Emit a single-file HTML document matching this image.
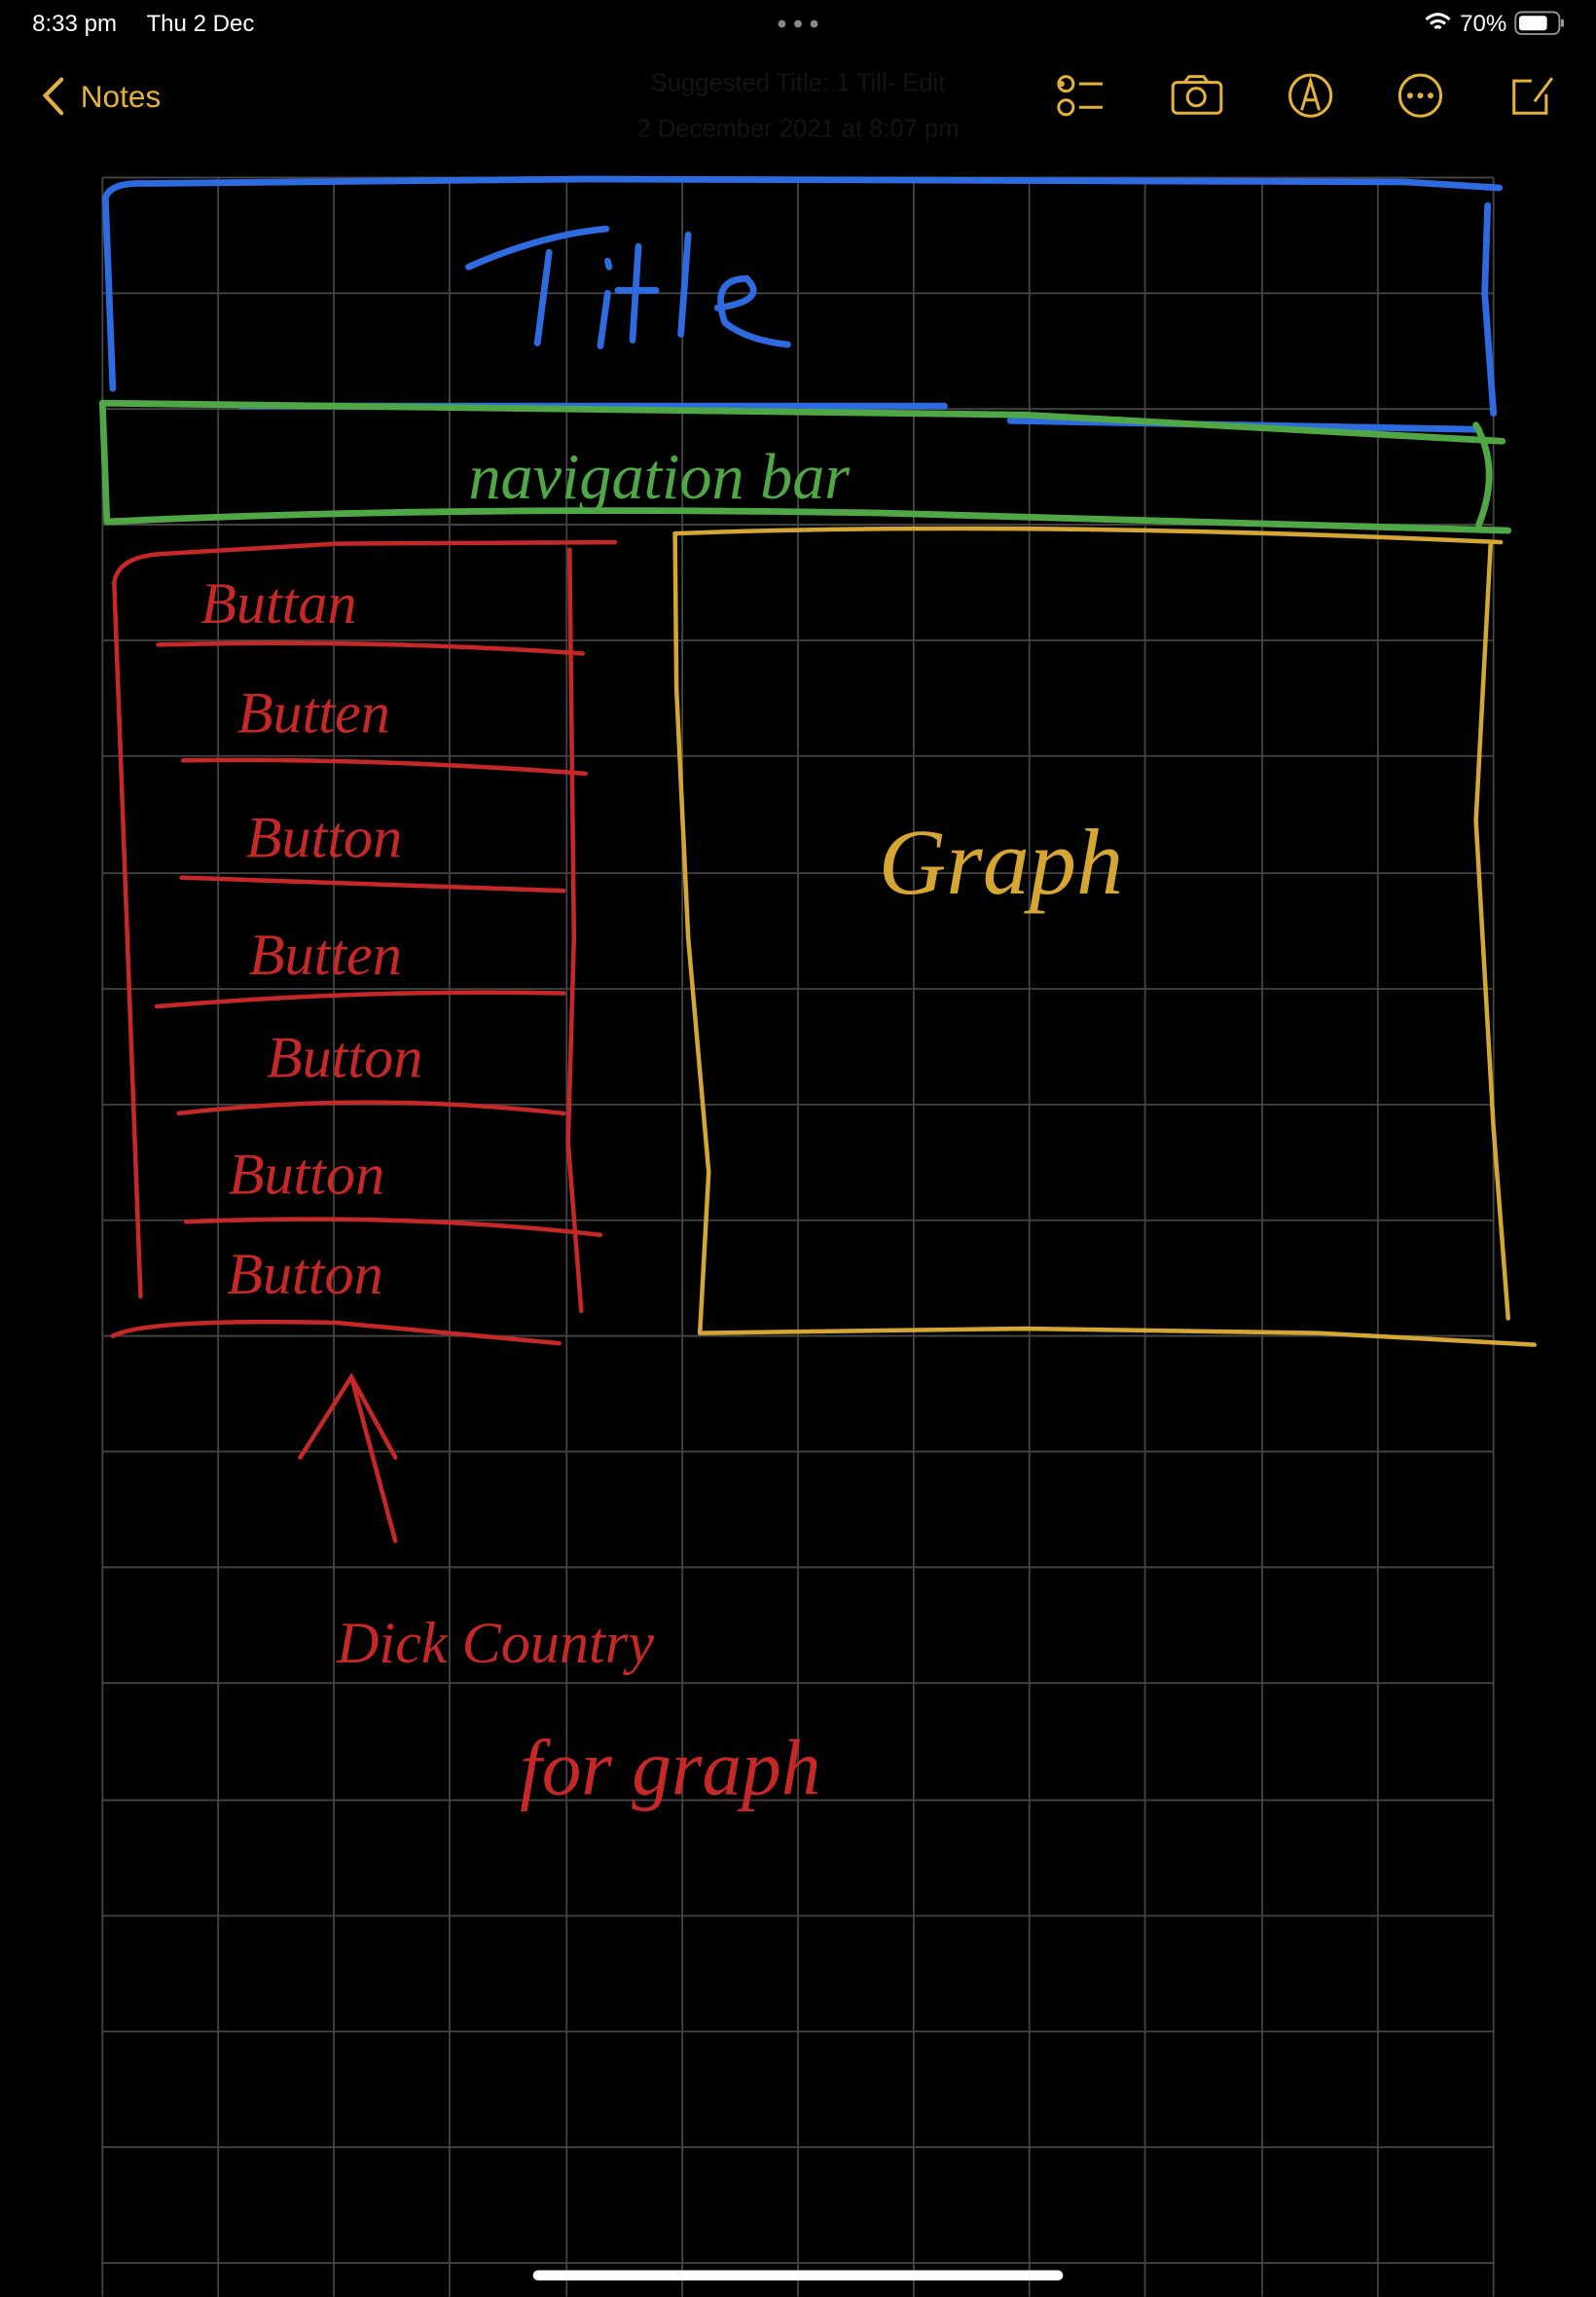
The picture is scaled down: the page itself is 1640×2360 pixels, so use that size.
<!DOCTYPE html>
<html><head><meta charset="utf-8"><style>
html,body{margin:0;padding:0;background:#000;width:1640px;height:2360px;overflow:hidden}
svg{display:block}
</style></head><body>
<svg width="1640" height="2360" viewBox="0 0 1090 1568" xmlns="http://www.w3.org/2000/svg" font-family="Liberation Sans, sans-serif">
<rect width="1090" height="1568" fill="#000"/>
<g stroke="#444" stroke-width="1.2">
<line x1="70" y1="121" x2="70" y2="1568"/><line x1="149" y1="121" x2="149" y2="1568"/><line x1="228" y1="121" x2="228" y2="1568"/><line x1="307" y1="121" x2="307" y2="1568"/><line x1="387" y1="121" x2="387" y2="1568"/><line x1="466" y1="121" x2="466" y2="1568"/><line x1="545" y1="121" x2="545" y2="1568"/><line x1="624" y1="121" x2="624" y2="1568"/><line x1="703" y1="121" x2="703" y2="1568"/><line x1="782" y1="121" x2="782" y2="1568"/><line x1="862" y1="121" x2="862" y2="1568"/><line x1="941" y1="121" x2="941" y2="1568"/><line x1="1020" y1="121" x2="1020" y2="1568"/>
<line x1="70" y1="121" x2="1020" y2="121"/><line x1="70" y1="200" x2="1020" y2="200"/><line x1="70" y1="279" x2="1020" y2="279"/><line x1="70" y1="358" x2="1020" y2="358"/><line x1="70" y1="437" x2="1020" y2="437"/><line x1="70" y1="516" x2="1020" y2="516"/><line x1="70" y1="596" x2="1020" y2="596"/><line x1="70" y1="675" x2="1020" y2="675"/><line x1="70" y1="754" x2="1020" y2="754"/><line x1="70" y1="833" x2="1020" y2="833"/><line x1="70" y1="912" x2="1020" y2="912"/><line x1="70" y1="991" x2="1020" y2="991"/><line x1="70" y1="1070" x2="1020" y2="1070"/><line x1="70" y1="1149" x2="1020" y2="1149"/><line x1="70" y1="1229" x2="1020" y2="1229"/><line x1="70" y1="1308" x2="1020" y2="1308"/><line x1="70" y1="1387" x2="1020" y2="1387"/><line x1="70" y1="1466" x2="1020" y2="1466"/><line x1="70" y1="1545" x2="1020" y2="1545"/>
</g>
<text x="22" y="21" fill="#fff" font-size="16">8:33 pm</text>
<text x="100" y="21" fill="#fff" font-size="16">Thu 2 Dec</text>
<circle cx="534" cy="16" r="2.6" fill="#888"/><circle cx="545" cy="16" r="2.6" fill="#888"/><circle cx="556" cy="16" r="2.6" fill="#888"/>
<path d="M974 13 q8-7 16 0 M977 16 q5-4 10 0 M980 19 q2-2 4 0" stroke="#fff" stroke-width="2" fill="none"/>
<text x="997" y="21" fill="#fff" font-size="16">70%</text>
<rect x="1035" y="8" width="30" height="15" rx="4" fill="none" stroke="#999" stroke-width="1.2"/>
<rect x="1037.5" y="10.5" width="19" height="10" rx="2" fill="#fff"/>
<rect x="1066" y="13" width="2" height="5" fill="#999"/>
<path d="M42 54 L31 65 L42 77" stroke="#e3b23c" stroke-width="2.8" fill="none" stroke-linecap="round"/>
<text x="55" y="73" fill="#e3b23c" font-size="21">Notes</text>
<text x="545" y="62" fill="#141414" font-size="17" text-anchor="middle">Suggested Title: 1 Till-  Edit</text>
<text x="545" y="93" fill="#141414" font-size="17" text-anchor="middle">2 December 2021 at 8:07 pm</text>
<g stroke="#e3b23c" stroke-width="2" fill="none">
<circle cx="728" cy="57" r="5"/><circle cx="728" cy="73" r="5"/><line x1="737" y1="57" x2="753" y2="57"/><line x1="737" y1="73" x2="753" y2="73"/>
<rect x="801" y="56" width="33" height="21" rx="3"/><path d="M809 56 l3-4 h10 l3 4"/><circle cx="817" cy="66" r="6"/>
<circle cx="895" cy="65" r="14"/><path d="M889 75 L895 55 L901 75 M891 68 h8"/>
<circle cx="970" cy="65" r="14"/>
<path d="M1046 55 H1034 V77 H1056 V64 M1048 69 L1060 53"/>
</g>
<circle cx="725" cy="57" r="2" fill="#e3b23c"/>
<circle cx="963" cy="65" r="2" fill="#e3b23c"/><circle cx="970" cy="65" r="2" fill="#e3b23c"/><circle cx="977" cy="65" r="2" fill="#e3b23c"/>
<g stroke="#2f6be0" stroke-width="4.5" fill="none" stroke-linecap="round">
<path d="M72 135 Q75 124 100 125 L400 122 L700 123 L960 124 L1024 128"/>
<path d="M72 135 L77 265"/>
<path d="M1016 140 L1014 200 L1020 282"/>
<path d="M165 277 L645 277"/><path d="M690 287 L1010 293"/>
<path d="M320 182 Q370 160 414 156 M375 172 L367 234 M415 200 L410 236 M415 178 L416 182 M436 168 L432 232 M422 198 L448 198 M470 160 L465 228 M490 210 Q525 205 510 190 Q485 190 495 220 Q510 232 538 235"/>
</g>
<g stroke="#4fa845" stroke-width="4.5" fill="none" stroke-linecap="round">
<path d="M70 275 L700 283 L1026 301"/>
<path d="M70 275 L73 356"/>
<path d="M73 356 Q300 345 600 350 L1030 362"/>
<path d="M1008 290 Q1025 320 1010 358"/>
</g>
<text x="320" y="340" fill="#4fa845" font-size="44" font-family="Liberation Serif, serif" font-style="italic">navigation  bar</text>
<g stroke="#c62828" stroke-width="3" fill="none" stroke-linecap="round">
<path d="M78 398 Q80 380 110 378 L230 371 L420 370"/>
<path d="M78 398 L96 885"/>
<path d="M389 375 L392 640 L388 780 L397 895"/>
<path d="M108 440 Q250 436 398 446"/>
<path d="M125 519 Q250 517 400 528"/>
<path d="M124 599 L385 608"/>
<path d="M107 687 Q250 675 385 678"/>
<path d="M122 760 Q250 745 385 760"/>
<path d="M127 834 Q280 828 410 843"/>
<path d="M77 912 Q100 900 230 903 L382 917"/>
<path d="M205 995 L240 940 L270 995 M240 940 L270 1052"/>
</g>
<g fill="#c62828" font-family="Liberation Serif, serif" font-style="italic" font-size="40">
<text x="137" y="425">Buttan</text>
<text x="162" y="500">Butten</text>
<text x="168" y="585">Button</text>
<text x="170" y="665">Butten</text>
<text x="182" y="735">Button</text>
<text x="156" y="815">Button</text>
<text x="155" y="883">Button</text>
<text x="230" y="1135">Dick Country</text>
<text x="355" y="1225" font-size="54">for graph</text>
</g>
<g stroke="#d5a634" stroke-width="3" fill="none" stroke-linecap="round">
<path d="M461 364 Q700 355 1025 370"/>
<path d="M461 364 L462 470 L470 640 L484 800 L478 910"/>
<path d="M1018 372 L1008 560 L1020 770 L1030 900"/>
<path d="M478 910 L700 907 L900 910 L1048 918"/>
</g>
<text x="600" y="610" fill="#d5a634" font-size="64" font-family="Liberation Serif, serif" font-style="italic">Graph</text>
<rect x="364" y="1550" width="362" height="7" rx="3.5" fill="#fff"/>
</svg>
</body></html>
